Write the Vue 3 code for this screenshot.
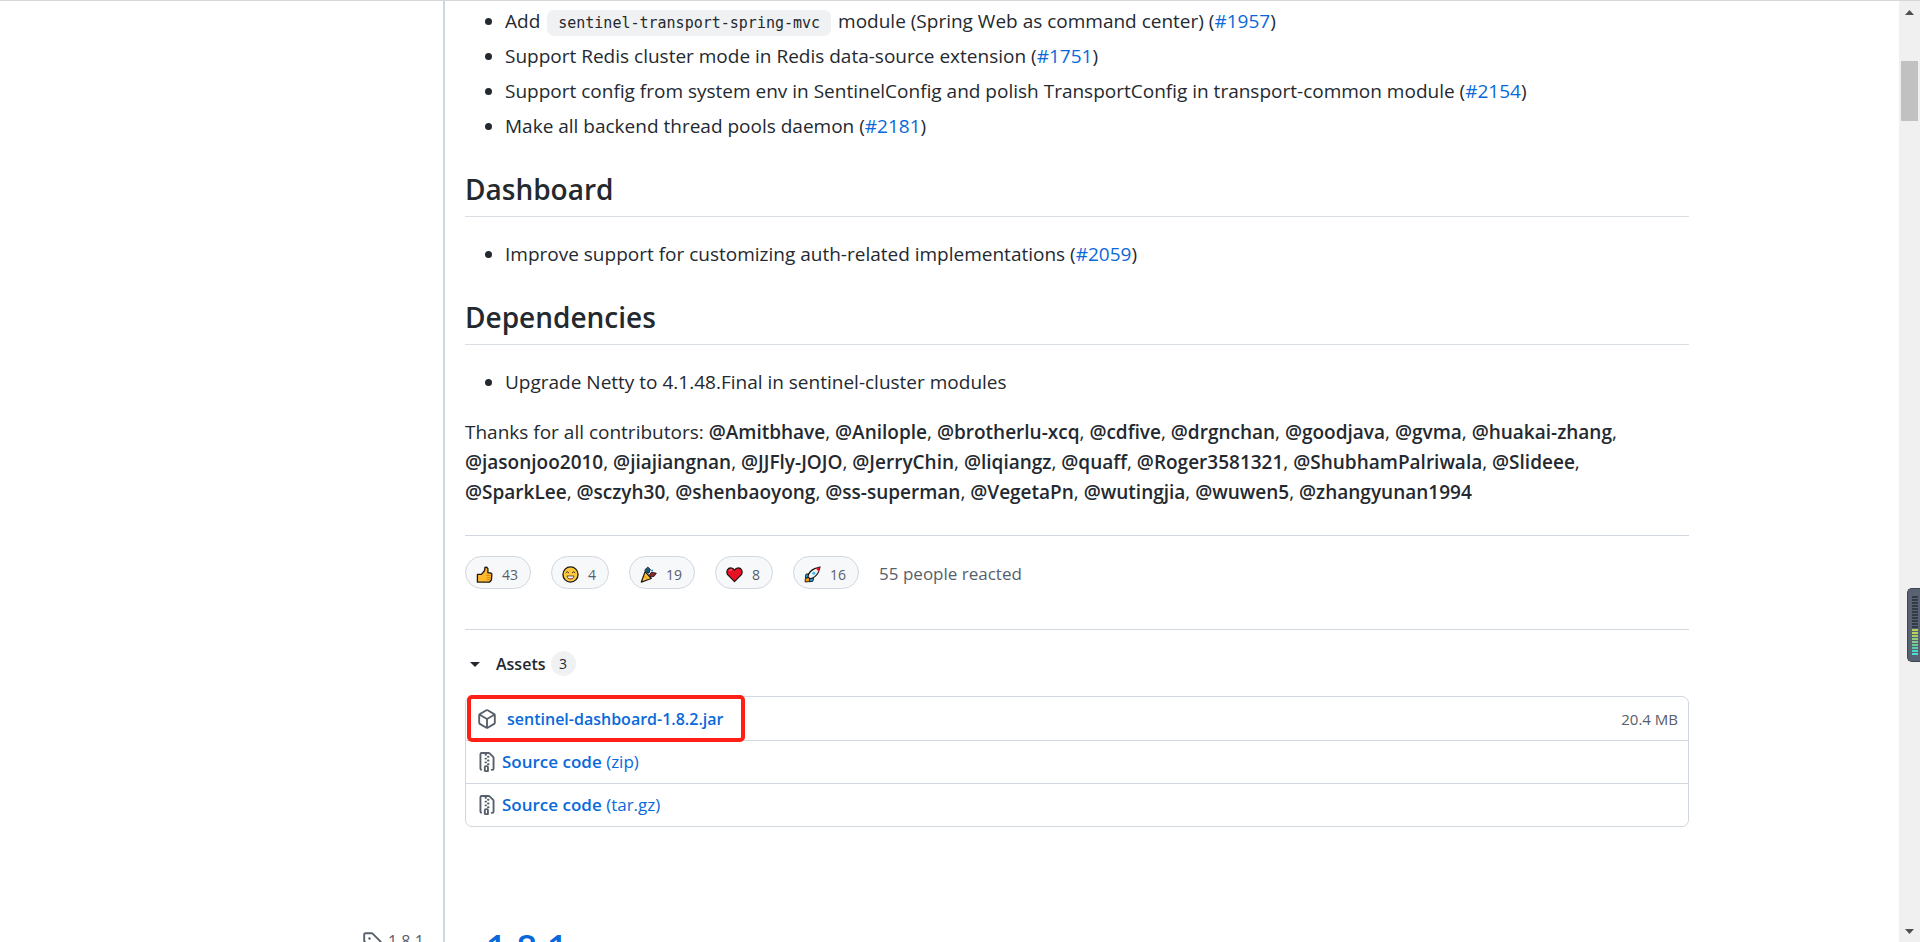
<script setup>
const coreItems = [
  { before: 'Support Redis cluster mode in Redis data-source extension', issue: '#1751' },
  { before: 'Support config from system env in SentinelConfig and polish TransportConfig in transport-common module', issue: '#2154' },
  { before: 'Make all backend thread pools daemon', issue: '#2181' },
]
const contributorLines = [
  ['Amitbhave', 'Anilople', 'brotherlu-xcq', 'cdfive', 'drgnchan', 'goodjava', 'gvma', 'huakai-zhang'],
  ['jasonjoo2010', 'jiajiangnan', 'JJFly-JOJO', 'JerryChin', 'liqiangz', 'quaff', 'Roger3581321', 'ShubhamPalriwala', 'Slideee'],
  ['SparkLee', 'sczyh30', 'shenbaoyong', 'ss-superman', 'VegetaPn', 'wutingjia', 'wuwen5', 'zhangyunan1994'],
]
const reactions = [
  { name: 'thumbs up', kind: 'thumb', count: 43 },
  { name: 'laugh', kind: 'laugh', count: 4 },
  { name: 'hooray', kind: 'party', count: 19 },
  { name: 'heart', kind: 'heart', count: 8 },
  { name: 'rocket', kind: 'rocket', count: 16 },
]
const sources = ['(zip)', '(tar.gz)']
const meterOff = 11
const meterOn = ['#b4cf52', '#b8d65a', '#a5cf68', '#8fcf7c', '#7dce8c', '#69cd98', '#58cda6', '#48d8c4', '#4fe0d4']
</script>

<template>
  <div class="page">
    <aside class="side">
      <a class="tag" href="#1.8.1">
        <svg class="tag-icon" viewBox="0 0 16 16" aria-hidden="true">
          <path fill-rule="evenodd" d="M2.5 7.775V2.75a.25.25 0 01.25-.25h5.025a.25.25 0 01.177.073l6.25 6.25a.25.25 0 010 .354l-5.025 5.025a.25.25 0 01-.354 0l-6.25-6.25a.25.25 0 01-.073-.177zm-1.5 0V2.75C1 1.784 1.784 1 2.75 1h5.025c.464 0 .91.184 1.238.513l6.25 6.25a1.75 1.75 0 010 2.474l-5.026 5.026a1.75 1.75 0 01-2.474 0l-6.25-6.25A1.75 1.75 0 011 7.775zM6 5a1 1 0 100 2 1 1 0 000-2z" />
        </svg>
        <span>1.8.1</span>
      </a>
    </aside>

    <main class="main">
      <ul class="notes">
        <li>Add <code>sentinel-transport-spring-mvc</code> module (Spring Web as command center) (<a href="#1957">#1957</a>)</li>
        <li v-for="item in coreItems" :key="item.issue">{{ item.before }} (<a :href="item.issue">{{ item.issue }}</a>)</li>
      </ul>

      <h2>Dashboard</h2>
      <ul class="notes">
        <li>Improve support for customizing auth-related implementations (<a href="#2059">#2059</a>)</li>
      </ul>

      <h2>Dependencies</h2>
      <ul class="notes">
        <li>Upgrade Netty to 4.1.48.Final in sentinel-cluster modules</li>
      </ul>

      <p class="thanks">
        Thanks for all contributors:
        <template v-for="(line, l) in contributorLines" :key="l">
          <template v-for="(name, n) in line" :key="name"><a :href="'#' + name">@{{ name }}</a><template v-if="l < 2 || n < line.length - 1">, </template></template>
          <br v-if="l < 2">
        </template>
      </p>

      <section class="reactions">
        <button v-for="r in reactions" :key="r.kind" class="pill" type="button" :aria-label="r.count + ' ' + r.name">
          <svg viewBox="0 0 18 18" aria-hidden="true" stroke-linejoin="round">
            <template v-if="r.kind === 'thumb'">
              <path d="M1.500 8.800h4.200L9 5l.5-3.600 1.800-.3 1.300 1.800v4.300h2.700l1.500 1.300-.5 6.300-1.900 2.200H1.500z" fill="#ffb92e" stroke="#1d1a12" stroke-width="1.4" />
              <path d="M11 10h4.500M11.300 12.300h4M11.300 14.400h3.200" stroke="#df8500" fill="none" />
            </template>
            <template v-else-if="r.kind === 'laugh'">
              <circle cx="9" cy="9" r="8" fill="#ffc83d" stroke="#1d1a12" stroke-width="1.4" />
              <path d="M4 7.200q1.600-2.200 3.300 0M10.700 7.200q1.600-2.200 3.300 0" stroke="#33291b" fill="none" />
              <path d="M5.200 10.600h7.600q-.6 3.300-3.800 3.300t-3.800-3.300z" fill="#fff" stroke="#33291b" stroke-width=".8" />
              <path d="M7.200 13.200q1.800-1 3.600 0-1.800 1-3.600 0z" fill="#e33b45" />
            </template>
            <template v-else-if="r.kind === 'party'">
              <path d="M5.400 6l6.500 7.200L1.400 17z" fill="#ffc83d" stroke="#1d1a12" stroke-width="1.3" />
              <path d="M5 4.200l3.300-3 2.600 2.400-1.500 4L7 6.500z" fill="#165a7e" stroke="#172226" />
              <path d="M10 9.500l2-2.800 5.300.9-2.400 3.300-3.700.8z" fill="#8e2830" stroke="#2b1519" />
              <path d="M4.700 10.500l3.500 3.600" stroke="#df8500" />
              <circle cx="12.800" cy="4.700" r="1" fill="#1687af" />
            </template>
            <template v-else-if="r.kind === 'heart'">
              <path d="M9 16.500L1.700 9.200C-.3 5.500 2 2 5 2q2.600 0 4 2.400Q10.400 2 13 2c3 0 5.300 3.500 3.300 7.200z" fill="#e81224" stroke="#1d1113" stroke-width="1.3" />
              <path d="M3.500 5.300q1-2 3-1" fill="none" stroke="#f45b68" stroke-width="1.6" />
            </template>
            <template v-else>
              <path d="M4.500 12l-3.200 1.600-.1 3.300 3.600-.3L7 14z" fill="#ff9b19" stroke="#1d1a12" />
              <path d="M5.500 8L2 8.800l-.5 4 4.200-1zM10.200 12.600l-.8 3.600-4 .5 1.200-4.100z" fill="#1ba4dd" stroke="#172226" />
              <path d="M4.300 11.500q.6-6 7-8.700L17 1l-1.600 5.300q-3.200 6.200-9.200 7.200z" fill="#eef3f7" stroke="#1d1a12" stroke-width="1.2" />
              <path d="M12.500 2.600L16.800 1.200l-1.400 4.500z" fill="#e81224" />
              <circle cx="10.400" cy="7.700" r="1.600" fill="#39bce8" />
            </template>
          </svg>
          <span>{{ r.count }}</span>
        </button>
        <span class="reacted">55 people reacted</span>
      </section>

      <details class="assets" open>
        <summary>
          <span class="caret"></span>
          <span class="assets-title">Assets</span>
          <span class="counter">3</span>
        </summary>
        <ul class="files">
          <li>
            <a class="file jar" href="#jar">
              <svg viewBox="0 0 16 16" aria-hidden="true">
                <path fill-rule="evenodd" d="M8.878.392a1.75 1.75 0 00-1.756 0l-5.25 3.045A1.75 1.75 0 001 4.951v6.098c0 .624.332 1.2.872 1.514l5.25 3.045a1.75 1.75 0 001.756 0l5.25-3.045c.54-.313.872-.89.872-1.514V4.951c0-.624-.332-1.2-.872-1.514L8.878.392zM7.875 1.69a.25.25 0 01.25 0l4.63 2.685L8 7.133 3.245 4.375l4.63-2.685zM2.5 5.677v5.372c0 .09.047.171.125.216l4.625 2.683V8.432L2.5 5.677zm6.25 8.271l4.625-2.683a.25.25 0 00.125-.216V5.677L8.75 8.432v5.516z" />
              </svg>
              <strong>sentinel-dashboard-1.8.2.jar</strong>
            </a>
            <span class="size">20.4 MB</span>
          </li>
          <li v-for="s in sources" :key="s">
            <a class="file" :href="'#' + s">
              <svg viewBox="0 0 16 16" aria-hidden="true">
                <path fill-rule="evenodd" d="M3.5 1.75a.25.25 0 01.25-.25h3a.75.75 0 000 1.5h.5a.75.75 0 000-1.5h2.086a.25.25 0 01.177.073l2.914 2.914a.25.25 0 01.073.177v8.586a.25.25 0 01-.25.25h-.5a.75.75 0 000 1.5h.5A1.75 1.75 0 0014 13.25V4.664c0-.464-.184-.909-.513-1.237L10.573.513A1.75 1.75 0 009.336 0H3.75A1.75 1.75 0 002 1.75v11.5c0 .649.353 1.214.874 1.515a.75.75 0 10.752-1.298.25.25 0 01-.126-.217V1.75zM8.75 3a.75.75 0 000 1.5h.5a.75.75 0 000-1.5h-.5zM6 5.25a.75.75 0 01.75-.75h.5a.75.75 0 010 1.5h-.5A.75.75 0 016 5.25zm2 1.5A.75.75 0 018.75 6h.5a.75.75 0 010 1.5h-.5A.75.75 0 018 6.75zm-1.25.75a.75.75 0 000 1.5h.5a.75.75 0 000-1.5h-.5zM8 9.75A.75.75 0 018.75 9h.5a.75.75 0 010 1.5h-.5A.75.75 0 018 9.75zm-.75.75a1.75 1.75 0 00-1.75 1.75v3c0 .414.336.75.75.75h2.5a.75.75 0 00.75-.75v-3a1.75 1.75 0 00-1.75-1.75h-.5zM7 12.25a.25.25 0 01.25-.25h.5a.25.25 0 01.25.25v2.25H7v-2.25z" />
              </svg>
              <span><strong>Source code</strong> {{ s }}</span>
            </a>
          </li>
        </ul>
      </details>

      <h1><a href="#1.8.1">1.8.1</a></h1>
    </main>

    <div class="scrollbar" aria-hidden="true">
      <svg class="arrow" viewBox="0 0 9 5"><path d="M4.500 0L9 5H0z" /></svg>
      <div class="track"><div class="thumb"></div></div>
      <svg class="arrow" viewBox="0 0 9 5"><path d="M0 0h9L4.500 5z" /></svg>
      <div class="meter">
        <i v-for="n in meterOff" :key="n"></i>
        <i v-for="c in meterOn" :key="c" :style="{ background: c }"></i>
      </div>
    </div>
  </div>
</template>

<style>
html, body {
  margin: 0;
  background: #fff;
}
</style>

<style scoped>
.page {
  position: relative;
  display: flex;
  box-sizing: border-box;
  height: 100vh;
  overflow: hidden;
  border-top: 1px solid #d5d6d8;
  color: #24292f;
  font-family: "Open Sans", "Noto Sans", sans-serif;
  font-size: 19px;
  line-height: 30px;
}
a {
  color: #0969da;
  text-decoration: none;
}
strong {
  font-weight: 600;
}
.side {
  box-sizing: border-box;
  width: 445px;
  flex: none;
  border-right: 2px solid #d0d7de;
}
.tag {
  display: flex;
  align-items: center;
  gap: 6px;
  margin: 925px 0 0 362px;
  color: #57606a;
  font-size: 16px;
}
.tag-icon {
  width: 20px;
  height: 20px;
  fill: currentColor;
}
.main {
  flex: 1;
  min-width: 0;
  margin: 5px 231px 0 20px;
}
.notes {
  margin: 0;
  padding-left: 40px;
}
.notes li + li {
  margin-top: 5px;
}
code {
  margin: 0 2px;
  padding: 4px 11px;
  border-radius: 7px;
  background: #eff1f3;
  font-family: "DejaVu Sans Mono", "Liberation Mono", monospace;
  font-size: 15px;
  line-height: 18px;
}
h2 {
  margin: 30px 0 22px;
  padding-bottom: 9px;
  border-bottom: 1px solid #d8dee4;
  font-size: 28px;
  font-weight: 600;
  line-height: 36px;
}
.thanks {
  margin: 20px 0 28px;
  white-space: nowrap;
}
.thanks a {
  color: #24292f;
  font-weight: 600;
}
.reactions {
  display: flex;
  align-items: center;
  gap: 20px;
  padding: 20px 0 40px;
  border-top: 1px solid #d0d7de;
  border-bottom: 1px solid #d0d7de;
}
.pill {
  display: flex;
  align-items: center;
  gap: 9px;
  box-sizing: border-box;
  height: 33px;
  padding: 4px 12px 0 10px;
  border: 1px solid #d0d7de;
  border-radius: 17px;
  background: #f6f8fa;
  color: #57606a;
  font: 14px/24px "Open Sans", "Noto Sans", sans-serif;
}
.pill svg {
  width: 17px;
  height: 17px;
}
.reacted {
  padding-top: 3px;
  color: #57606a;
  font-size: 17px;
}
summary {
  display: flex;
  align-items: center;
  height: 25px;
  margin: 21px 0 20px;
  list-style: none;
}
.caret {
  margin: 2px 16px 0 5px;
  border: 5px solid transparent;
  border-top-color: #24292f;
  border-bottom: 0;
}
.assets-title {
  font-size: 16px;
  font-weight: 600;
}
.counter {
  width: 25px;
  margin-left: 5px;
  border-radius: 13px;
  background: #eff1f3;
  font-size: 14px;
  line-height: 25px;
  text-align: center;
}
.files {
  margin: 0;
  padding: 0;
  border: 1px solid #d0d7de;
  border-radius: 7px;
  list-style: none;
}
.files li {
  display: flex;
  align-items: center;
  justify-content: space-between;
  height: 42px;
  padding: 0 10px 0 11px;
}
.files li + li {
  border-top: 1px solid #d0d7de;
}
.files li:first-child {
  height: 43px;
  padding-left: 0;
}
.file {
  display: flex;
  align-items: center;
  gap: 5px;
  font-size: 17px;
}
.file svg {
  width: 20px;
  height: 20px;
  fill: #57606a;
}
.jar {
  box-sizing: border-box;
  height: 47px;
  gap: 10px;
  margin-left: 1px;
  padding: 0 18px 0 6px;
  border: 4px solid #fe2016;
  border-radius: 5px;
  font-size: 16px;
}
.size {
  color: #57606a;
  font-size: 15px;
}
h1 {
  margin: 96px 0 0 21px;
  font-size: 36px;
  font-weight: 600;
  line-height: 50px;
}
.scrollbar {
  position: absolute;
  top: 0;
  right: 0;
  bottom: 0;
  display: flex;
  flex-direction: column;
  align-items: center;
  justify-content: space-between;
  box-sizing: border-box;
  width: 21px;
  padding: 9px 0 8px;
  background: #f0f0f0;
}
.arrow {
  width: 9px;
  height: 5px;
  fill: #505050;
}
.track {
  flex: 1;
  width: 17px;
}
.thumb {
  height: 60px;
  margin-top: 46px;
  background: #c1c1c1;
}
.meter {
  position: absolute;
  top: 587px;
  right: 0;
  display: flex;
  flex-direction: column;
  gap: 1px;
  box-sizing: border-box;
  width: 13px;
  height: 74px;
  padding: 7px 2px 0 4px;
  border: 1px solid #3d4552;
  border-right: 0;
  border-radius: 5px 0 0 5px;
  background: #596273;
}
.meter i {
  height: 2px;
  flex: none;
  background: #343b47;
}
</style>
